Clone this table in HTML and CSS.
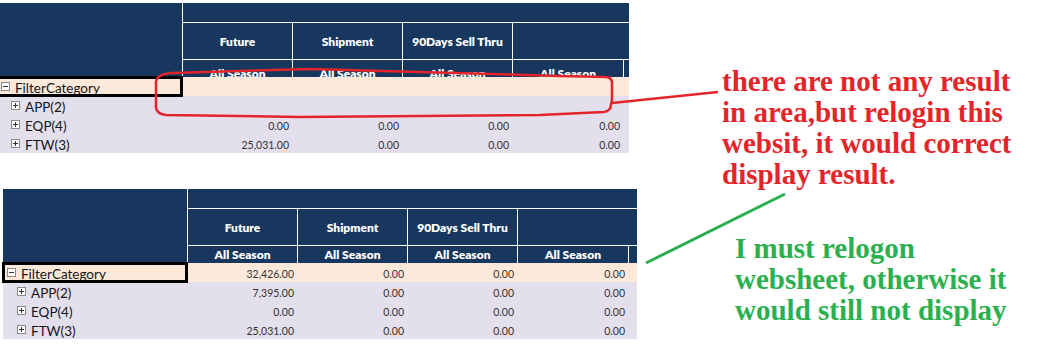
FILE: index.html
```html
<!DOCTYPE html>
<html>
<head>
<meta charset="utf-8">
<link rel="stylesheet" href="styles.css">
</head>
<body>
<div class="page">
  <div class="sheet sheet-top">
    <div class="corner"></div>
    <div class="band"></div>
    <div class="hcell">Future</div>
    <div class="hcell">Shipment</div>
    <div class="hcell">90Days Sell Thru</div>
    <div class="hcell span2"></div>
    <div class="scell clipped">All Season</div>
    <div class="scell clipped">All Season</div>
    <div class="scell clipped">All Season</div>
    <div class="scell clipped">All Season</div>
    <div class="scell"></div>

    <div class="lbl root sel"><span class="tg"><svg width="9" height="9" viewBox="0 0 9 9"><rect x="0.5" y="0.5" width="8" height="8" fill="#fff" stroke="#8a8a8a"/><path d="M2 4.5h5" stroke="#333"/></svg></span>FilterCategory</div>
    <div class="num peach"></div><div class="num peach"></div><div class="num peach"></div><div class="num peach"></div><div class="num peach"></div>

    <div class="lbl child"><span class="tg"><svg width="9" height="9" viewBox="0 0 9 9"><rect x="0.5" y="0.5" width="8" height="8" fill="#fff" stroke="#8a8a8a"/><path d="M2 4.5h5M4.5 2v5" stroke="#333"/></svg></span>APP(2)</div>
    <div class="num"></div><div class="num"></div><div class="num"></div><div class="num"></div><div class="num"></div>

    <div class="lbl child"><span class="tg"><svg width="9" height="9" viewBox="0 0 9 9"><rect x="0.5" y="0.5" width="8" height="8" fill="#fff" stroke="#8a8a8a"/><path d="M2 4.5h5M4.5 2v5" stroke="#333"/></svg></span>EQP(4)</div>
    <div class="num">0.00</div><div class="num">0.00</div><div class="num">0.00</div><div class="num">0.00</div><div class="num"></div>

    <div class="lbl child"><span class="tg"><svg width="9" height="9" viewBox="0 0 9 9"><rect x="0.5" y="0.5" width="8" height="8" fill="#fff" stroke="#8a8a8a"/><path d="M2 4.5h5M4.5 2v5" stroke="#333"/></svg></span>FTW(3)</div>
    <div class="num">25,031.00</div><div class="num">0.00</div><div class="num">0.00</div><div class="num">0.00</div><div class="num"></div>
  </div>

  <div class="sheet sheet-bottom">
    <div class="corner"></div>
    <div class="band"></div>
    <div class="hcell">Future</div>
    <div class="hcell">Shipment</div>
    <div class="hcell">90Days Sell Thru</div>
    <div class="hcell span2"></div>
    <div class="scell">All Season</div>
    <div class="scell">All Season</div>
    <div class="scell">All Season</div>
    <div class="scell">All Season</div>
    <div class="scell"></div>

    <div class="lbl root sel"><span class="tg"><svg width="9" height="9" viewBox="0 0 9 9"><rect x="0.5" y="0.5" width="8" height="8" fill="#fff" stroke="#8a8a8a"/><path d="M2 4.5h5" stroke="#333"/></svg></span>FilterCategory</div>
    <div class="num peach">32,426.00</div><div class="num peach">0.00</div><div class="num peach">0.00</div><div class="num peach">0.00</div><div class="num peach"></div>

    <div class="lbl child"><span class="tg"><svg width="9" height="9" viewBox="0 0 9 9"><rect x="0.5" y="0.5" width="8" height="8" fill="#fff" stroke="#8a8a8a"/><path d="M2 4.5h5M4.5 2v5" stroke="#333"/></svg></span>APP(2)</div>
    <div class="num">7,395.00</div><div class="num">0.00</div><div class="num">0.00</div><div class="num">0.00</div><div class="num"></div>

    <div class="lbl child"><span class="tg"><svg width="9" height="9" viewBox="0 0 9 9"><rect x="0.5" y="0.5" width="8" height="8" fill="#fff" stroke="#8a8a8a"/><path d="M2 4.5h5M4.5 2v5" stroke="#333"/></svg></span>EQP(4)</div>
    <div class="num">0.00</div><div class="num">0.00</div><div class="num">0.00</div><div class="num">0.00</div><div class="num"></div>

    <div class="lbl child"><span class="tg"><svg width="9" height="9" viewBox="0 0 9 9"><rect x="0.5" y="0.5" width="8" height="8" fill="#fff" stroke="#8a8a8a"/><path d="M2 4.5h5M4.5 2v5" stroke="#333"/></svg></span>FTW(3)</div>
    <div class="num">25,031.00</div><div class="num">0.00</div><div class="num">0.00</div><div class="num">0.00</div><div class="num"></div>
  </div>

  <svg class="marks" width="1048" height="362" viewBox="0 0 1048 362">
    <path d="M612 100 L612 83 Q612 77 605 77 L560 76 L310 69 L172 73 Q157 74 156 82 L156 108 Q157 114 166 115 L300 117 L540 115 L604 112 Q611 111 611 104 Z" fill="none" stroke="#e3252b" stroke-width="2.5" stroke-linejoin="round"/>
    <path d="M612 103 L718 92" fill="none" stroke="#e3252b" stroke-width="2.5"/>
    <path d="M646 263 L785 194" fill="none" stroke="#2bb04f" stroke-width="3"/>
  </svg>

  <div class="note note-red">there are not any result<br>in area,but relogin this<br>websit, it would correct<br>display result.</div>
  <div class="note note-green">I must relogon<br>websheet, otherwise it<br>would still not display</div>
</div>
</body>
</html>
```

FILE: styles.css
```css
html, body {
  margin: 0;
  padding: 0;
  background: #ffffff;
}

.page {
  position: relative;
  width: 1048px;
  height: 362px;
  overflow: hidden;
  font-family: Lato, "Open Sans", sans-serif;
}

.sheet {
  display: grid;
  grid-template-rows: 19px 37px 18px 19px 19px 19px 19px;
  background: #ffffff;
}

.sheet-top {
  grid-template-columns: 184px 110px 110px 110px 111px 6px;
  width: 631px;
  margin: 3px 0 0 -2px;
}

.sheet-bottom {
  grid-template-columns: 184px 110px 110px 110px 111px 9px;
  width: 634px;
  margin: 36px 0 0 3px;
}

.corner {
  grid-row: 1 / 4;
  grid-column: 1;
  background: #17375e;
}

.band {
  grid-row: 1;
  grid-column: 2 / 7;
  background: #17375e;
  border-left: 1px solid #ffffff;
}

.hcell,
.scell {
  background: #17375e;
  color: #ffffff;
  font-weight: 800;
  font-size: 12px;
  border-left: 1px solid #ffffff;
  border-top: 1px solid #ffffff;
  display: flex;
  align-items: center;
  justify-content: center;
  white-space: nowrap;
  overflow: hidden;
}

.span2 {
  grid-column: 5 / 7;
}

.clipped {
  align-items: flex-start;
  padding-top: 6px;
}

.lbl {
  grid-column: 1;
  display: flex;
  align-items: center;
  font-size: 13.5px;
  color: #151515;
  background: #e4dfec;
  white-space: nowrap;
  padding-top: 2px;
}

.lbl.root {
  background: #fde9d9;
  padding-left: 3px;
}

.sheet-bottom .lbl.root {
  padding-left: 4px;
}

.lbl.child {
  padding-left: 13px;
}

.sheet-bottom .lbl.child {
  padding-left: 14px;
}

.sel {
  outline: 3px solid #000000;
  outline-offset: -2px;
  position: relative;
  z-index: 1;
}

.tg {
  display: inline-flex;
  width: 9px;
  height: 9px;
  margin-right: 5px;
  margin-top: -2px;
}

.tg svg {
  display: block;
}

.num {
  background: #e4dfec;
  font-size: 10.5px;
  color: #333333;
  display: flex;
  align-items: center;
  justify-content: flex-end;
  padding-right: 3px;
  padding-top: 2px;
  white-space: nowrap;
}

.num.peach {
  background: #fde9d9;
}

.marks {
  position: absolute;
  left: 0;
  top: 0;
  pointer-events: none;
  z-index: 2;
}

.note {
  position: absolute;
  font-family: "Liberation Serif", "Times New Roman", serif;
  font-weight: 700;
  font-size: 29px;
  line-height: 31px;
  white-space: nowrap;
}

.note-red {
  left: 722px;
  top: 66px;
  color: #e3252b;
}

.note-green {
  left: 735px;
  top: 233px;
  color: #2bb04f;
}
```
